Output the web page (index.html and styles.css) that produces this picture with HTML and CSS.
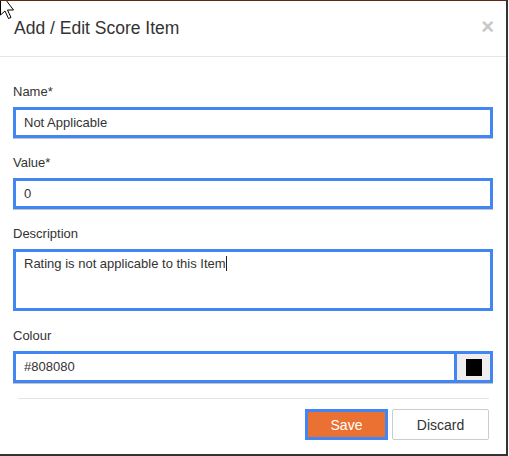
FILE: index.html
```html
<!DOCTYPE html>
<html lang="en">
  <head>
    <meta charset="UTF-8" />
    <meta name="viewport" content="width=device-width, initial-scale=1.0" />
    <title>Add / Edit Score Item</title>
    <link rel="stylesheet" href="styles.css">
  </head>
  <body>
    <div class="modal">
      <div class="modal-header">
        <h4 class="modal-title">Add / Edit Score Item</h4>
        <span class="close">&times;</span>
      </div>
      <div class="modal-body">
        <div class="form-group">
          <label>Name*</label>
          <div class="field">Not Applicable</div>
        </div>
        <div class="form-group">
          <label>Value*</label>
          <div class="field">0</div>
        </div>
        <div class="form-group">
          <label>Description</label>
          <div class="field textarea">Rating is not applicable to this Item<span class="caret"></span></div>
        </div>
        <div class="form-group last">
          <label>Colour</label>
          <div class="input-group">
            <div class="field plain">#808080</div>
            <div class="swatch"><span class="swatch-box"></span></div>
          </div>
        </div>
      </div>
      <div class="modal-footer">
        <button class="btn btn-save">Save</button>
        <button class="btn btn-discard">Discard</button>
      </div>
    </div>
    <svg class="cursor" width="16" height="26" viewBox="0 0 16 26">
      <path d="M0.5 -8 L0.5 14 L5 10 L8.5 17.5 L11 16.5 L7.5 9 L13.5 9 Z" fill="#fff" stroke="#000" stroke-width="1"/>
    </svg>
  </body>
</html>
```

FILE: styles.css
```css
* {
  box-sizing: border-box;
  margin: 0;
  padding: 0;
  font-family: "Liberation Sans", Arial, Helvetica, sans-serif;
}
body {
  background-color: #fff;
  color: #333;
  width: 509px;
  height: 456px;
  overflow: hidden;
  position: relative;
}
.modal {
  width: 508px;
  height: 456px;
  background-color: #fff;
  border-top: 1px solid #5c2a0e;
  border-right: 2px solid #333;
  border-bottom: 2px solid #333;
}
.modal-header {
  display: flex;
  justify-content: space-between;
  align-items: flex-start;
  padding: 15px 12px 15px 14px;
  border-bottom: 1px solid #e5e5e5;
}
.modal-title {
  font-size: 17.5px;
  font-weight: normal;
  line-height: 25px;
  color: #333;
}
.close {
  font-size: 22px;
  font-weight: bold;
  line-height: 16px;
  margin-top: 3px;
  color: #c8c8c8;
}
.modal-body {
  padding: 26px 13px 15px 13px;
}
.form-group {
  margin-bottom: 16px;
}
.form-group.last {
  margin-bottom: 0;
}
.form-group label {
  display: block;
  font-size: 13px;
  line-height: 18px;
  margin-bottom: 6px;
  color: #333;
}
.field {
  height: 31px;
  border: 3px solid #4285f4;
  box-shadow: 0 1px 0 #c4c4c4;
  padding: 0 8px;
  font-size: 13px;
  line-height: 25px;
  color: #333;
}
.field.textarea {
  height: 62px;
  padding-top: 3px;
  line-height: 18px;
  box-shadow: none;
}
.caret {
  display: inline-block;
  width: 1px;
  height: 15px;
  background-color: #222;
  vertical-align: -3px;
}
.input-group {
  display: flex;
  height: 32px;
  border: 3px solid #4285f4;
  box-shadow: 0 1px 0 #c4c4c4;
}
.field.plain {
  flex: 1;
  height: 26px;
  border: none;
  border-right: 3px solid #4285f4;
  box-shadow: none;
  padding-left: 8px;
  line-height: 26px;
}
.swatch {
  width: 33px;
  display: flex;
  align-items: center;
  justify-content: center;
  background-color: #eee;
}
.swatch-box {
  width: 16px;
  height: 17px;
  background-color: #000;
}
.modal-footer {
  display: flex;
  justify-content: flex-end;
  gap: 4px;
  margin: 0 17px 0 18px;
  padding-top: 10px;
  border-top: 1px solid #e5e5e5;
}
.btn {
  height: 31px;
  font-size: 14px;
  cursor: pointer;
}
.btn-save {
  width: 83px;
  background-color: #eb7132;
  color: #fff;
  border: 3px solid #4285f4;
}
.btn-discard {
  width: 97px;
  background-color: #fff;
  color: #333;
  border: 1px solid #ccc;
  border-radius: 2px;
}
.cursor {
  position: absolute;
  left: 0;
  top: 1px;
}
```
